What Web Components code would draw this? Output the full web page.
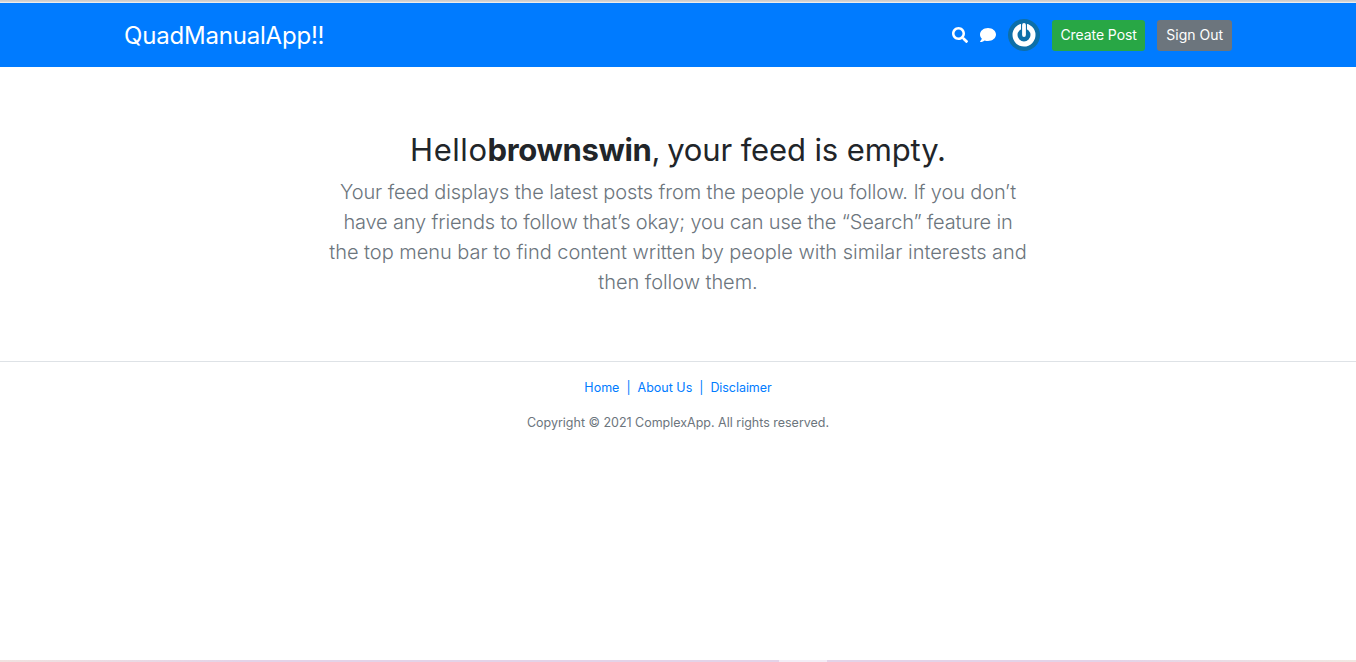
<!DOCTYPE html>
<html lang="en"><head><meta charset="utf-8"><title>QuadManualApp!!</title>
<style>
html,body{margin:0;padding:0;background:#fff}
body{font-family:Inter,"Liberation Sans",sans-serif;height:662px;overflow:hidden;display:flex;flex-direction:column}
</style></head><body>
<app-topline></app-topline>
<app-header brand="QuadManualApp!!"></app-header>
<feed-empty user="brownswin"></feed-empty>
<app-footer></app-footer>
<app-bottomline></app-bottomline>
<script>
function def(name,html,init){customElements.define(name,class extends HTMLElement{constructor(){super();this.attachShadow({mode:'open'}).innerHTML=html;}connectedCallback(){init&&init(this)}})}
def('app-topline','<style>:host{display:block;height:3px;background:linear-gradient(#c9c9c9,#d9d9d9 66%,#fff);flex:none}</style>');
def('icon-search',`<style>:host{display:inline-flex}</style><svg width="16" height="16" viewBox="0 0 512 512" fill="#fff"><path d="M505 442.700L405.300 343c-4.500-4.500-10.600-7-17-7H372c27.600-35.300 44-79.700 44-128C416 93.100 322.900 0 208 0S0 93.100 0 208s93.100 208 208 208c48.300 0 92.700-16.400 128-44v16.300c0 6.400 2.500 12.500 7 17l99.700 99.700c9.400 9.400 24.600 9.400 33.900 0l28.300-28.300c9.400-9.400 9.400-24.600.1-34zM208 336c-70.700 0-128-57.200-128-128 0-70.700 57.200-128 128-128 70.700 0 128 57.200 128 128 0 70.700-57.200 128-128 128z"/></svg>`);
def('icon-chat',`<style>:host{display:inline-flex}</style><svg width="16" height="16" viewBox="0 0 512 512" fill="#fff"><path d="M256 32C114.600 32 0 125.100 0 240c0 49.600 21.400 95 57 130.700C44.500 421.100 2.700 466 2.200 466.500c-2.200 2.300-2.800 5.700-1.500 8.700S4.800 480 8 480c66.300 0 116-31.800 140.600-51.400 32.700 12.300 69 19.400 107.400 19.400 141.400 0 256-93.100 256-208S397.400 32 256 32z"/></svg>`);
def('user-avatar',`<style>:host{display:inline-flex}</style><svg width="32" height="32" viewBox="0 0 32 32"><circle cx="16" cy="16" r="16" fill="#0d6fa8"/><circle cx="16" cy="16" r="9" fill="none" stroke="#fff" stroke-width="5"/><path d="M16 4v9" stroke="#0d6fa8" stroke-width="6"/><path d="M16 6v10" stroke="#fff" stroke-width="3.800" stroke-linecap="round"/></svg>`);
def('app-button',`<style>:host{display:inline-block;font-size:14px;line-height:21px;letter-spacing:var(--ls,-.08px);color:#fff;padding:5px var(--px,8.500px);border-radius:3.200px;background:var(--bg);white-space:nowrap}span{position:relative;top:-1px}</style><span><slot></slot></span>`);
def('app-header',`<style>
:host{display:block;background:#007bff;flex:none}
.wrap{width:1140px;margin:0 auto;padding:0 16px 0 16px;box-sizing:border-box;height:64px;display:flex;align-items:center;justify-content:space-between}
.brand{font-size:24px;color:#fff;letter-spacing:-.2px}
.right{display:flex;align-items:center}
icon-search{margin-right:12px}icon-chat{margin-right:12px}
user-avatar{margin-right:12px}
app-button+app-button{margin-left:12px}
</style><div class="wrap"><div class="brand"></div><div class="right"><icon-search></icon-search><icon-chat></icon-chat><user-avatar></user-avatar><app-button style="--bg:#28a745">Create Post</app-button><app-button style="--bg:#6c757d;--ls:0;--px:9px">Sign Out</app-button></div></div>`,el=>{el.shadowRoot.querySelector('.brand').textContent=el.getAttribute('brand')});
def('feed-empty',`<style>
:host{display:block;flex:none;height:294px;box-sizing:border-box;padding-top:64px;text-align:center}
h2{margin:0 0 8px;font-size:31px;line-height:38.400px;font-weight:400;color:#212529;letter-spacing:-.12px}
h2 .hello{letter-spacing:.55px}
h2 strong{letter-spacing:-.35px}
h2 .comma{letter-spacing:-1px}
p{margin:0;font-size:20px;line-height:30px;font-weight:300;color:#6c757d}
p span{display:block}
</style><h2><span class="hello">Hello</span><strong></strong><span class="comma">, </span>your feed is empty.</h2><p><span style="letter-spacing:-.12px">Your feed displays the latest posts from the people you follow. If you don’t</span><span style="letter-spacing:-.17px">have any friends to follow that’s okay; you can use the “Search” feature in</span><span style="letter-spacing:-.03px">the top menu bar to find content written by people with similar interests and</span><span style="letter-spacing:-.05px">then follow them.</span></p>`,el=>{el.shadowRoot.querySelector('strong').textContent=el.getAttribute('user')});
def('app-footer',`<style>
:host{display:block;flex:none;border-top:1px solid #dee2e6;text-align:center;font-size:12.500px;color:#6c757d;padding-top:16px}
p{margin:0 0 15px;line-height:20px}
a{color:#007bff;text-decoration:none}
.sep{color:#007bff}
.links{display:flex;justify-content:center;gap:7px}
.cr{letter-spacing:-.01px}
</style><p class="links"><a href="#">Home</a><span class="sep">|</span><a href="#">About Us</a><span class="sep">|</span><a href="#" style="letter-spacing:-.06px">Disclaimer</a></p><p class="cr">Copyright © 2021 ComplexApp. All rights reserved.</p>`);
def('app-bottomline',`<style>:host{display:flex;height:2px;margin-top:auto;flex:none;background:linear-gradient(90deg,#f0e2e0,#e3d3e8 18%,#e3d3e8 82%,#f0e8e2)}i{margin-left:779px;width:48px;background:#f3edf6}</style><i></i>`);
</script></body></html>
